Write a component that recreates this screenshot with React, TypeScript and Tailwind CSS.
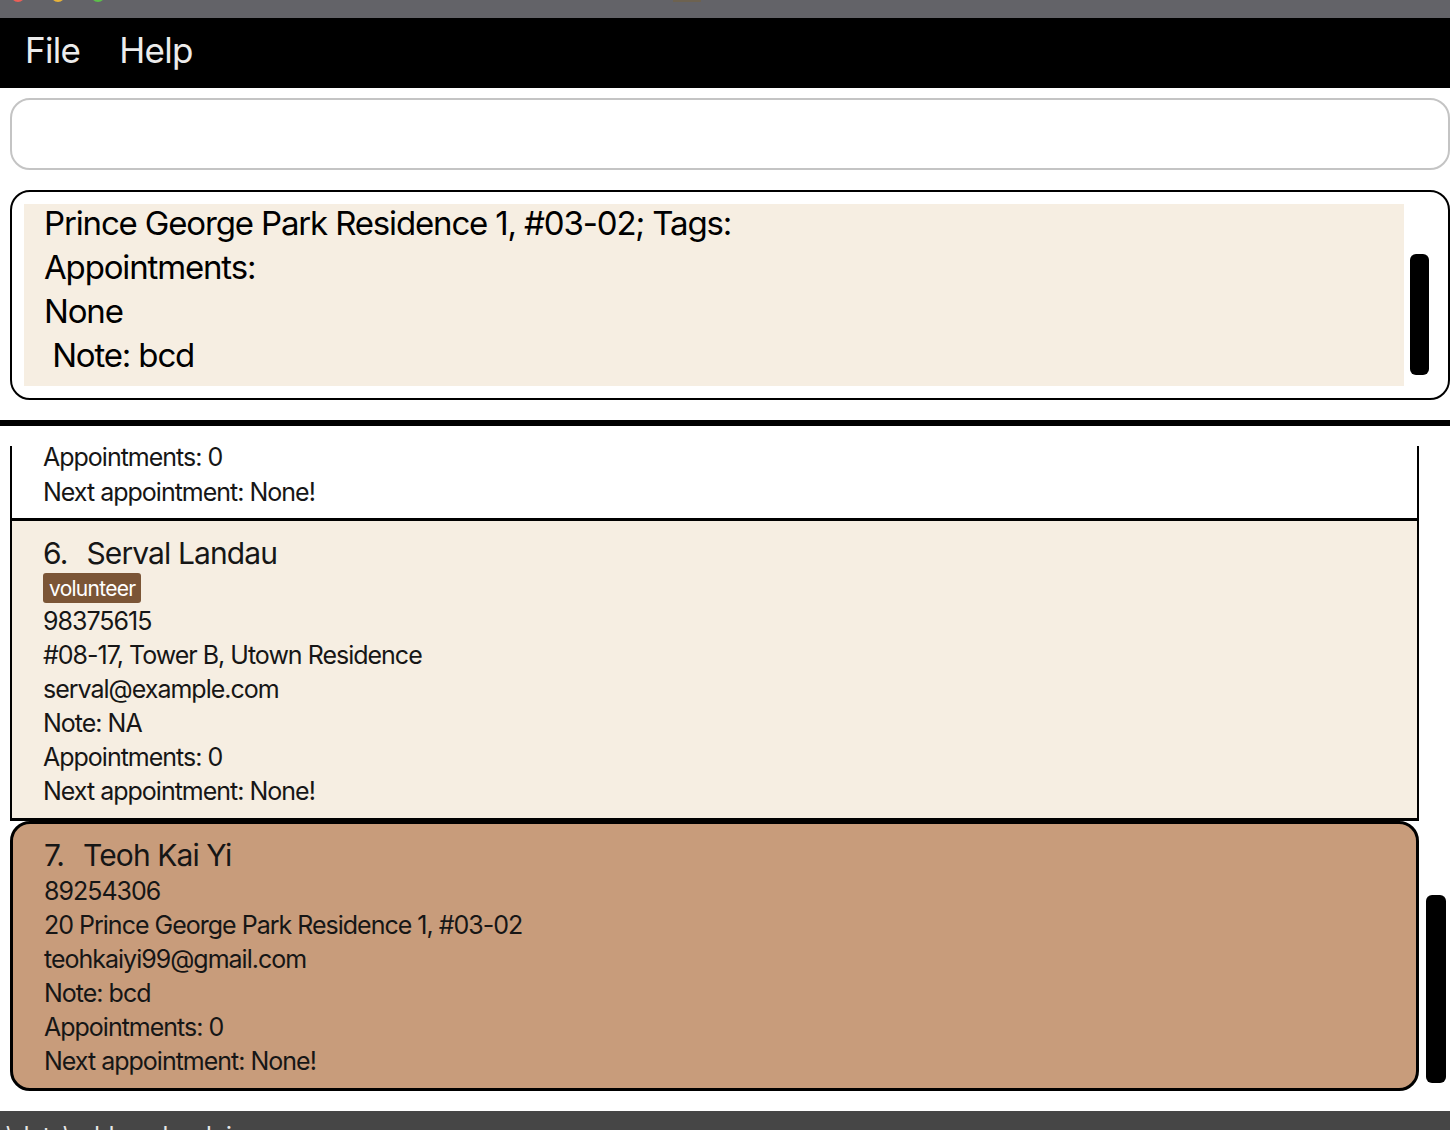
import React from 'react';

const font = { fontFamily: 'Inter, "Noto Sans", sans-serif' };

function Line({ children, className = 'h-[34px] leading-[36px]' }: { children: React.ReactNode; className?: string }) {
  return <div className={`${className} text-[25px] tracking-[-0.04em] whitespace-pre`}>{children}</div>;
}

function Name({ n, name }: { n: string; name: string }) {
  return (
    <div className="h-[36px] leading-[36px] text-[30px] tracking-[-0.03em] whitespace-pre flex">
      <span>{n}</span>
      <span className="ml-[19px]">{name}</span>
    </div>
  );
}

export default function App() {
  return (
    <div className="h-[1130px] w-[1450px] overflow-hidden bg-white flex flex-col text-[#161616]" style={font}>
      {/* window title bar */}
      <div className="relative h-[18px] shrink-0 bg-[#636368]">
        <div className="absolute left-[11px] top-[-12px] h-[14px] w-[14px] rounded-full bg-[#ec5f57]" />
        <div className="absolute left-[51px] top-[-12px] h-[14px] w-[14px] rounded-full bg-[#e8b33a]" />
        <div className="absolute left-[91px] top-[-12px] h-[14px] w-[14px] rounded-full bg-[#5cc04a]" />
        <div className="absolute left-[673px] top-0 h-[2px] w-[28px] bg-[#6d6250]" />
      </div>

      {/* menu bar */}
      <div className="h-[70px] shrink-0 bg-black flex items-center gap-[39px] pl-[25px] pb-[6px] text-[35px] text-[#ececec] tracking-[-0.02em]">
        <span>File</span>
        <span>Help</span>
      </div>

      {/* command box */}
      <div className="ml-[10px] mt-[10px] h-[72px] shrink-0 rounded-[20px] border-2 border-[#c4c4c4] bg-white" />

      {/* result display */}
      <div className="ml-[10px] mt-[20px] h-[210px] shrink-0 rounded-[20px] border-2 border-black flex items-start pl-[12px] pt-[12px]">
        <div className="h-[182px] w-[1380px] bg-[#f6eee2] pl-[20px] overflow-hidden">
          <div className="-mt-[3px] text-[33px] leading-[44px] tracking-[-0.035em] whitespace-pre text-black">
            <div>Prince George Park Residence 1, #03-02; Tags:</div>
            <div>Appointments:</div>
            <div>None</div>
            <div> Note: bcd</div>
          </div>
        </div>
        <div className="ml-[6px] mt-[50px] h-[121px] w-[19px] rounded-[6px] bg-black" />
      </div>

      {/* divider */}
      <div className="mt-[20px] h-[6px] shrink-0 bg-black" />

      {/* person list */}
      <div className="mt-[20px] ml-[10px] h-[645px] shrink-0 flex">
        <div className="w-[1409px] flex flex-col">
          <div className="h-[75px] overflow-hidden border-x-2 border-b-[3px] border-black bg-white pl-[31px]">
            <Line className="h-[28px] leading-[22px]">Appointments: 0</Line>
            <Line>Next appointment: None!</Line>
          </div>

          <div className="h-[300px] border-x-2 border-b-[3px] border-black bg-[#f6eee2] pl-[31px] pt-[14px]">
            <Name n="6." name="Serval Landau" />
            <div className="mt-[2px] flex">
              <span className="h-[30px] rounded-[3px] bg-[#7b5536] px-[6px] text-[21px] leading-[31px] tracking-[-0.035em] text-white">volunteer</span>
            </div>
            <Line>98375615</Line>
            <Line>#08-17, Tower B, Utown Residence</Line>
            <Line>serval@example.com</Line>
            <Line>Note: NA</Line>
            <Line>Appointments: 0</Line>
            <Line>Next appointment: None!</Line>
          </div>

          <div className="h-[270px] rounded-[20px] border-[3px] border-black bg-[#c89c7b] pl-[31px] pt-[13px]">
            <Name n="7." name="Teoh Kai Yi" />
            <Line>89254306</Line>
            <Line>20 Prince George Park Residence 1, #03-02</Line>
            <Line>teohkaiyi99@gmail.com</Line>
            <Line>Note: bcd</Line>
            <Line>Appointments: 0</Line>
            <Line>Next appointment: None!</Line>
          </div>
        </div>
        <div className="ml-[7px] mt-[449px] h-[188px] w-[20px] rounded-[6px] bg-black" />
      </div>

      {/* status bar */}
      <div className="mt-[20px] h-[40px] shrink-0 bg-[#464646] pl-[6px] pt-[11px] text-[24px] leading-[28px] text-[#e8e8e8]">
        \data\addressbook.json
      </div>
    </div>
  );
}
